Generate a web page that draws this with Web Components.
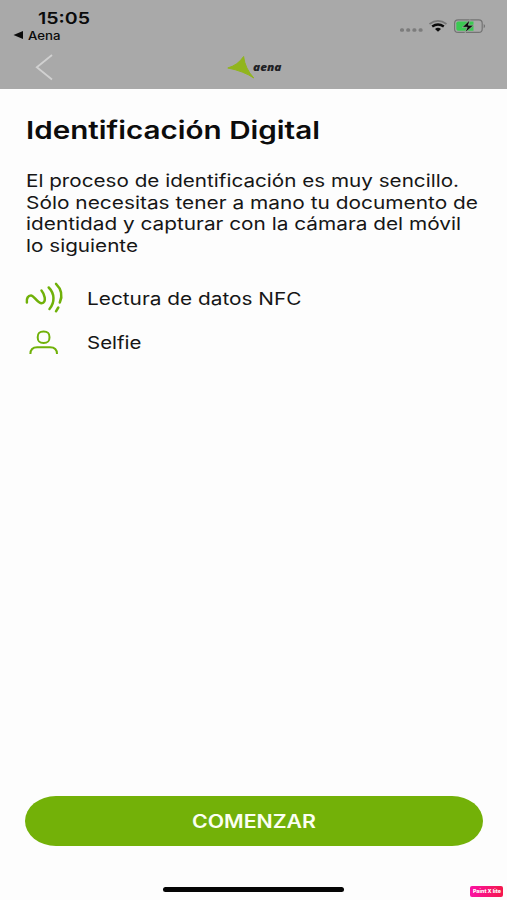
<!DOCTYPE html>
<html lang="es">
<head>
<meta charset="utf-8">
<title>Identificación Digital</title>
<style>
	html, body {
		margin: 0;
		height: 100%;
		background: #fdfdfd;
	}
	body {
		font-family: Inter, "Liberation Sans", sans-serif;
		color: #0c0c0c;
	}
</style>
</head>
<body>
<id-screen>
	<status-bar slot="top" time="15:05" app="Aena"></status-bar>
	<nav-bar slot="top"></nav-bar>
	<wide-line size="24.8" weight="600" length="294" height="42" baseline="30">Identificación Digital</wide-line>
	<id-intro>
		<wide-line size="17.6" length="433" height="21.5" baseline="16">El proceso de identificación es muy sencillo.</wide-line>
		<wide-line size="17.6" length="452" height="21.5" baseline="16">Sólo necesitas tener a mano tu documento de</wide-line>
		<wide-line size="17.6" length="435" height="21.5" baseline="16">identidad y capturar con la cámara del móvil</wide-line>
		<wide-line size="17.6" length="112" height="21.5" baseline="16">lo siguiente</wide-line>
	</id-intro>
	<id-step>
		<svg slot="icon" width="42" height="36" viewBox="0 0 42 36" fill="none" stroke="#70b109" stroke-width="2.500" stroke-linecap="round" stroke-linejoin="round">
			<path d="M1.900 22.500C1.300 18.500 3 15.500 6 15.500C9 15.500 12.500 23.300 16.600 23.300C19.300 23.300 20.200 20.500 19.700 17.500C19.200 14.500 18 12.300 16.500 10.500"/>
			<path d="M23.700 7.500C29.800 13.500 30 22.500 24.500 29"/>
			<path d="M31 3.800C36.300 9 37.600 16 34.800 22.500M33.300 27.500L31 31.300"/>
		</svg>
		<wide-line size="17.8" length="214.5" height="24" baseline="18.700">Lectura de datos NFC</wide-line>
	</id-step>
	<id-step>
		<svg slot="icon" width="42" height="36" viewBox="0 0 42 36" fill="none" stroke="#70b109" stroke-width="2">
			<path d="M18.600 7.500C22.900 7.500 24.500 9 24.500 13.200C24.500 17.400 22.900 18.900 18.600 18.900S12.700 17.400 12.700 13.200C12.700 9 14.300 7.500 18.600 7.500Z"/>
			<path d="M5.400 30C5.400 25.300 8.200 23.200 12.200 23.200H25C29.200 23.200 32 25.300 32 30"/>
		</svg>
		<wide-line size="17.8" length="54.500" height="24" baseline="18.700">Selfie</wide-line>
	</id-step>
	<pill-button slot="bottom">
		<wide-line size="18" weight="600" length="124" height="24" baseline="19.200">COMENZAR</wide-line>
	</pill-button>
	<home-strip slot="bottom"></home-strip>
</id-screen>

<script>
// One line of text set to a given length, with stretched glyphs
class WideLine extends HTMLElement {

	connectedCallback(){
		const root = this.attachShadow({ mode: 'open' })
		const length = this.getAttribute('length')
		const height = this.getAttribute('height')
		root.innerHTML = `
			<style>
				:host {
					display: block;
					height: ${height}px;
					width: ${length}px;
				}
				svg {
					display: block;
					overflow: visible;
				}
				text {
					fill: currentColor;
					font-size: ${this.getAttribute('size')}px;
					font-weight: ${this.getAttribute('weight') || 400};
					font-style: ${this.getAttribute('slant') || 'normal'};
				}
			</style>
			<svg width="${length}" height="${height}">
				<text x="0" y="${this.getAttribute('baseline')}" textLength="${length}" lengthAdjust="spacingAndGlyphs"></text>
			</svg>
		`
		root.querySelector('text').textContent = this.textContent.trim()
	}
}

class IdScreen extends HTMLElement {

	connectedCallback(){
		this.attachShadow({ mode: 'open' }).innerHTML = `
			<style>
				:host {
					display: flex;
					flex-direction: column;
					height: 900px;
					overflow: hidden;
				}
				header {
					height: 89px;
					background: #a9a9a9;
				}
				main {
					flex: 1;
					padding: 20px 24px 0 26px;
				}
			</style>
			<header><slot name="top"></slot></header>
			<main><slot></slot></main>
			<footer><slot name="bottom"></slot></footer>
		`
	}
}

class StatusBar extends HTMLElement {

	connectedCallback(){
		this.attachShadow({ mode: 'open' }).innerHTML = `
			<style>
				:host {
					display: flex;
					justify-content: space-between;
					height: 45px;
					color: #0b0b0b;
				}
				.time {
					padding: 8px 0 0 38px;
				}
				.back {
					display: flex;
					gap: 5px;
					padding-left: 13px;
				}
				.signals {
					padding: 16px 18px 0 0;
				}
				svg {
					display: block;
				}
			</style>
			<div>
				<div class="time"><wide-line size="16.300" weight="600" length="52" height="20" baseline="16.300">${this.getAttribute('time')}</wide-line></div>
				<div class="back">
					<svg width="10" height="14"><path d="M.5 7L10 3V11Z" fill="#0b0b0b"/></svg>
					<wide-line size="11.300" weight="500" length="32.500" height="14" baseline="11.500">${this.getAttribute('app')}</wide-line>
				</div>
			</div>
			<div class="signals">
				<svg width="90" height="20" viewBox="0 0 90 20" fill="none">
					<g fill="#7c7c7c">
						<rect x="1" y="12.300" width="4" height="3.400" rx="1.500"/>
						<rect x="7.200" y="12.300" width="4" height="3.400" rx="1.500"/>
						<rect x="13.400" y="12.300" width="4" height="3.400" rx="1.500"/>
						<rect x="19.600" y="12.300" width="4" height="3.400" rx="1.500"/>
					</g>
					<path d="M30.500 7.900Q39 1.900 47.500 7.900" stroke="#777" stroke-width="1.800"/>
					<path d="M33.200 10.500Q39 6.300 44.800 10.500" stroke="#0b0b0b" stroke-width="2.400"/>
					<path d="M36 13Q39 10.600 42 13L39 15.700Z" fill="#0b0b0b"/>
					<rect x="55.600" y="3.800" width="27.600" height="12.600" rx="3.500" stroke="#737373" stroke-width="1.200"/>
					<path d="M59 5.500H74.500V14.700H59Q57.300 14.700 57.300 12.900V7.300Q57.300 5.500 59 5.500Z" fill="#3bc952"/>
					<path d="M84.700 8Q87.500 10 84.700 12.300Z" fill="#737373"/>
					<path d="M71 3.700L63.200 11.300H68.200L66 16.800L74.800 9.200H69.400Z" fill="#0b0b0b" stroke="#a9b9a9" stroke-width=".7"/>
				</svg>
			</div>
		`
	}
}

class NavBar extends HTMLElement {

	connectedCallback(){
		this.attachShadow({ mode: 'open' }).innerHTML = `
			<style>
				:host {
					display: grid;
					grid-template-columns: 1fr auto 1fr;
					align-items: center;
					height: 44px;
					color: #202124;
					font-family: "Open Sans", "Noto Sans", sans-serif;
				}
				.back {
					padding-left: 34px;
				}
				.logo {
					display: flex;
				}
				svg {
					display: block;
					overflow: visible;
				}
			</style>
			<div class="back">
				<svg width="20" height="28" fill="none" stroke="#d1d1d1" stroke-width="1.800"><path d="M18 2L2.800 14.300L18 26.500"/></svg>
			</div>
			<div class="logo">
				<svg width="28" height="26"><path d="M2.800 14Q13 11 18.600 2.500Q20 14.500 28.800 24Q18.500 17 2.800 14Z" fill="#91b51d" stroke="#91b51d"/></svg>
				<wide-line size="11.300" weight="800" slant="italic" length="28.500" height="26" baseline="16.600">aena</wide-line>
			</div>
		`
	}
}

class IdIntro extends HTMLElement {

	connectedCallback(){
		this.attachShadow({ mode: 'open' }).innerHTML = `
			<style>
				:host {
					display: block;
					padding: 20.300px 0 18.700px;
					color: #161616;
				}
			</style>
			<slot></slot>
		`
	}
}

class IdStep extends HTMLElement {

	connectedCallback(){
		this.attachShadow({ mode: 'open' }).innerHTML = `
			<style>
				:host {
					display: flex;
					align-items: center;
					gap: 20px;
					height: 44px;
					color: #161616;
				}
				.icon {
					display: flex;
					margin-left: -1px;
				}
			</style>
			<div class="icon"><slot name="icon"></slot></div>
			<slot></slot>
		`
	}
}

class PillButton extends HTMLElement {

	connectedCallback(){
		this.attachShadow({ mode: 'open' }).innerHTML = `
			<style>
				:host {
					display: block;
					padding: 0 24.500px 0 25px;
				}
				button {
					display: flex;
					align-items: center;
					justify-content: center;
					width: 100%;
					height: 50px;
					padding: 0;
					border: 0;
					border-radius: 31px / 25px;
					background: #73b108;
					color: #fbfff2;
					font-family: inherit;
				}
			</style>
			<button><slot></slot></button>
		`
	}
}

class HomeStrip extends HTMLElement {

	connectedCallback(){
		this.attachShadow({ mode: 'open' }).innerHTML = `
			<style>
				:host {
					display: grid;
					grid-template-columns: 1fr 181px 1fr;
					height: 54px;
				}
				.bar {
					grid-column: 2;
					height: 5px;
					margin-top: 41px;
					border-radius: 3px;
					background: #050505;
				}
				.tag {
					justify-self: end;
					display: flex;
					align-items: center;
					justify-content: center;
					width: 33px;
					height: 11px;
					margin: 40px 4px 0 0;
					border-radius: 2px;
					background: linear-gradient(90deg, #fa12a4, #f5174b);
					color: #fff;
				}
			</style>
			<div class="bar"></div>
			<div class="tag"><wide-line size="5.400" weight="800" length="28" height="7" baseline="5.400">Paint X lite</wide-line></div>
		`
	}
}

customElements.define('wide-line', WideLine)
customElements.define('id-screen', IdScreen)
customElements.define('status-bar', StatusBar)
customElements.define('nav-bar', NavBar)
customElements.define('id-intro', IdIntro)
customElements.define('id-step', IdStep)
customElements.define('pill-button', PillButton)
customElements.define('home-strip', HomeStrip)
</script>
</body>
</html>
